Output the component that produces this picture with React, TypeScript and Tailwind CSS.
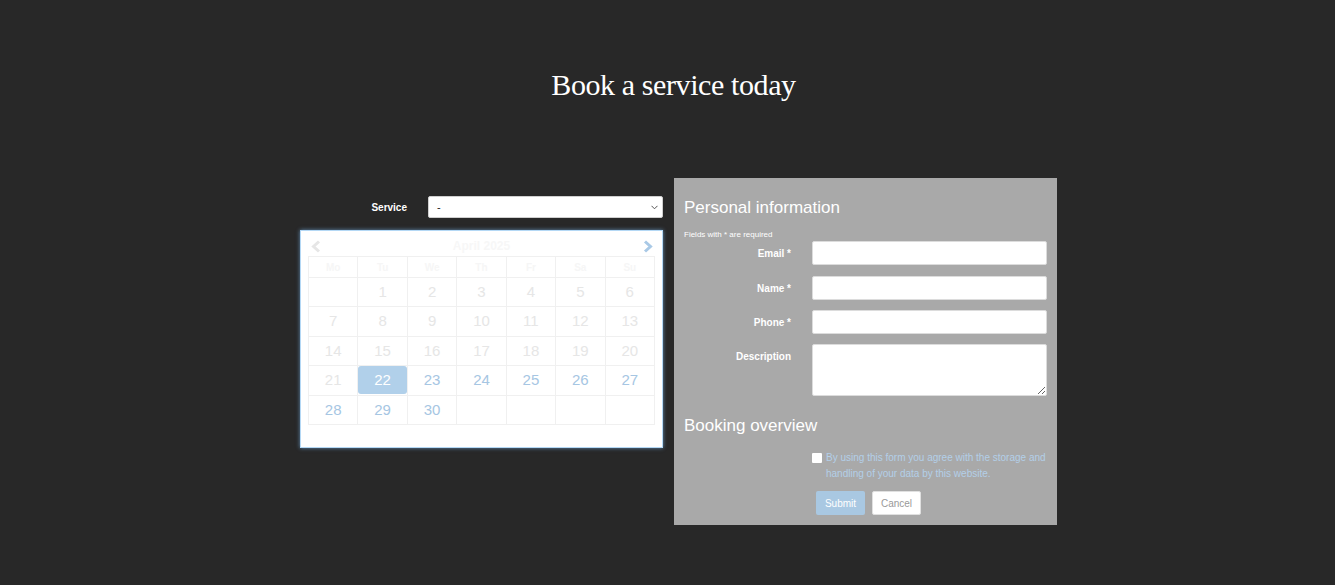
import React from "react";

const weeks: (number | null)[][] = [
  [null, 1, 2, 3, 4, 5, 6],
  [7, 8, 9, 10, 11, 12, 13],
  [14, 15, 16, 17, 18, 19, 20],
  [21, 22, 23, 24, 25, 26, 27],
  [28, 29, 30, null, null, null, null],
];
const heads = ["Mo", "Tu", "We", "Th", "Fr", "Sa", "Su"];

function Calendar() {
  return (
    <div className="mt-[12px] w-[363px] h-[218px] bg-white border border-[#b4d8f5] shadow-[0_0_4px_rgba(120,180,235,0.7)] px-[7px] pt-[5px]">
      <div className="relative h-[20px] flex items-center justify-center">
        <svg className="absolute left-[2px] top-[4px]" width="12" height="13" viewBox="0 0 12 13">
          <path d="M9 1.5 L3.5 6.5 L9 11.5" fill="none" stroke="#e6e6e6" strokeWidth="3" />
        </svg>
        <span className="text-[12px] font-bold text-[#f7f7f7]">April 2025</span>
        <svg className="absolute right-[1px] top-[4px]" width="12" height="13" viewBox="0 0 12 13">
          <path d="M3 1.5 L8.5 6.5 L3 11.5" fill="none" stroke="#a9c9e6" strokeWidth="3" />
        </svg>
      </div>
      <table className="w-[347px] border-collapse table-fixed">
        <thead>
          <tr className="h-[21px]">
            {heads.map((h) => (
              <th key={h} className="border border-[#f0f0f0] text-[10px] font-bold text-[#f6f6f6] p-0">
                {h}
              </th>
            ))}
          </tr>
        </thead>
        <tbody>
          {weeks.map((w, i) => (
            <tr key={i} className="h-[29.4px]">
              {w.map((d, j) => {
                const sel = d === 22;
                const avail = d !== null && d > 22;
                return (
                  <td key={j} className="border border-[#f0f0f0] p-0 text-center text-[15px]">
                    {d !== null &&
                      (sel ? (
                        <div className="h-[28px] rounded-[3px] bg-[#b1d0ea] text-white leading-[28px]">{d}</div>
                      ) : (
                        <span className={avail ? "text-[#a6c6e3]" : "text-[#e6e6e6]"}>{d}</span>
                      ))}
                  </td>
                );
              })}
            </tr>
          ))}
        </tbody>
      </table>
    </div>
  );
}

function Field({ label, tall, className }: { label: string; tall?: boolean; className?: string }) {
  return (
    <div className={"flex items-start gap-[21px] " + (className ?? "")}>
      <div className="w-[107px] h-[24px] pt-[2px] text-right text-[10px] font-bold text-white leading-[22px]">{label}</div>
      {tall ? (
        <textarea className="w-[235px] h-[52px] bg-white border border-[#dcdcdc] rounded-[2px] resize" />
      ) : (
        <input className="w-[235px] h-[24px] bg-white border border-[#dcdcdc] rounded-[2px]" />
      )}
    </div>
  );
}

export default function App() {
  return (
    <div className="min-h-[585px] bg-[#282828] font-['Liberation_Sans',Arial,sans-serif]">
      <h1 className="pt-[63px] pl-[12px] text-center text-[30px] leading-[44px] text-white font-['Liberation_Serif','Times_New_Roman',serif] tracking-[-0.4px]">
        Book a service today
      </h1>
      <div className="flex items-start pl-[300px] mt-[71px] gap-[11px]">
        <div className="mt-[18px] w-[363px]">
          <div className="flex items-center gap-[21px]">
            <div className="w-[107px] h-[22px] pt-[2px] leading-[20px] text-right text-[10px] font-bold text-white">Service</div>
            <div className="relative w-[235px] h-[22px] bg-white border border-[#cfcfcf] rounded-[2px] flex items-center pl-[8px] text-[11px] text-[#222]">
              -
              <svg className="absolute right-[4px] top-[8px]" width="7" height="5" viewBox="0 0 7 5">
                <path d="M0.5 0.8 L3.5 3.8 L6.5 0.8" fill="none" stroke="#555" strokeWidth="1" />
              </svg>
            </div>
          </div>
          <Calendar />
        </div>
        <div className="w-[383px] bg-[#a9a9a9] pt-[19px] pb-[10px] px-[10px]">
          <h2 className="text-[17px] leading-[22px] text-white">Personal information</h2>
          <div className="mt-[11px] text-[8px] leading-[10px] text-white">Fields with * are required</div>
          <div className="mt-[1px] flex flex-col">
            <Field label="Email *" />
            <Field label="Name *" className="mt-[11px]" />
            <Field label="Phone *" className="mt-[10px]" />
            <Field label="Description" className="mt-[10px]" tall />
          </div>
          <h2 className="mt-[19px] text-[17px] leading-[22px] text-white">Booking overview</h2>
          <div className="mt-[13px] flex items-start pl-[128px]">
            <div className="mt-[3px] w-[10px] h-[10px] bg-white rounded-[1px] shrink-0" />
            <div className="ml-[4px] text-[10px] leading-[16px] text-[#b3cfe8]">
              By using this form you agree with the storage and handling of your data by this website.
            </div>
          </div>
          <div className="mt-[9px] pl-[132px] flex gap-[7px]">
            <button className="w-[49px] h-[24px] bg-[#a9c8e2] text-white text-[10px] rounded-[2px]">Submit</button>
            <button className="w-[49px] h-[24px] bg-white border border-[#e0e0e0] text-[#999] text-[10px] rounded-[2px]">Cancel</button>
          </div>
        </div>
      </div>
    </div>
  );
}
